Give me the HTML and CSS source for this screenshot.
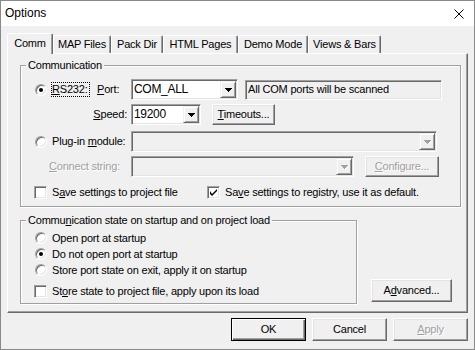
FILE: index.html
```html
<!doctype html>
<html lang="en">
  <head>
    <meta charset="UTF-8" />
    <title>Options</title>
    <link rel="stylesheet" href="styles.css">
  </head>
  <body>
    <div class="window">
      <div class="titlebar">
        <span class="title">Options</span>
        <svg class="close" width="10" height="10" viewBox="0 0 10 10">
          <path d="M0.5 0.5L9.5 9.5M9.5 0.5L0.5 9.5" stroke="#000" stroke-width="1" fill="none" />
        </svg>
      </div>

      <div class="client">
        <div class="tabs">
          <div class="tab active" style="width: 46px">Comm</div>
          <div class="tab" style="width: 58px">MAP Files</div>
          <div class="tab" style="width: 52px">Pack Dir</div>
          <div class="tab" style="width: 75px">HTML Pages</div>
          <div class="tab" style="width: 70px">Demo Mode</div>
          <div class="tab" style="width: 73px">Views &amp; Bars</div>
        </div>

        <div class="panel">
          <div class="group group-comm">
            <div class="group-title">Communication</div>

            <div class="row row-1 indent">
              <div class="choice" style="width: 62px">
                <span class="radio on"></span>
                <span class="opt-label focus"><u>R</u>S232:</span>
              </div>
              <span class="field-label" style="width: 34px"><u>P</u>ort:</span>
              <div class="combo" style="width: 107px">
                <span class="value">COM_ALL</span>
                <span class="drop"><svg width="7" height="4" viewBox="0 0 7 4"><path d="M0 0h7v1h-1v1h-1v1h-1v1h-1v-1h-1v-1h-1v-1h-1z" /></svg></span>
              </div>
              <div class="readonly">All COM ports will be scanned</div>
            </div>

            <div class="row row-2">
              <span class="field-label right"><u>S</u>peed:</span>
              <div class="combo" style="width: 70px">
                <span class="value">19200</span>
                <span class="drop"><svg width="7" height="4" viewBox="0 0 7 4"><path d="M0 0h7v1h-1v1h-1v1h-1v1h-1v-1h-1v-1h-1v-1h-1z" /></svg></span>
              </div>
              <button class="btn small" style="width: 63px"><u>T</u>imeouts...</button>
            </div>

            <div class="row row-3 indent">
              <div class="choice" style="width: 96px">
                <span class="radio"></span>
                <span class="opt-label">Plug-in <u>m</u>odule:</span>
              </div>
              <div class="combo disabled" style="width: 306px">
                <span class="value"></span>
                <span class="drop"><svg width="8" height="5" viewBox="0 0 8 5"><path class="hi" d="M1 1h7v1h-1v1h-1v1h-1v1h-1v-1h-1v-1h-1v-1h-1z" /><path d="M0 0h7v1h-1v1h-1v1h-1v1h-1v-1h-1v-1h-1v-1h-1z" /></svg></span>
              </div>
            </div>

            <div class="row row-4">
              <span class="field-label dim connect"><u>C</u>onnect string:</span>
              <div class="combo disabled" style="width: 223px">
                <span class="value"></span>
                <span class="drop"><svg width="8" height="5" viewBox="0 0 8 5"><path class="hi" d="M1 1h7v1h-1v1h-1v1h-1v1h-1v-1h-1v-1h-1v-1h-1z" /><path d="M0 0h7v1h-1v1h-1v1h-1v1h-1v-1h-1v-1h-1v-1h-1z" /></svg></span>
              </div>
              <button class="btn small dim" style="width: 74px"><u>C</u>onfigure...</button>
            </div>

            <div class="row row-5 check-row">
              <div class="check-opt" style="width: 173px">
                <span class="check"></span>
                <span class="opt-label">S<u>a</u>ve settings to project file</span>
              </div>
              <div class="check-opt">
                <span class="check on"><svg width="7" height="7" viewBox="0 0 7 7"><path d="M0 2v3l2 2 5-5V0L2 5z" /></svg></span>
                <span class="opt-label">Sa<u>v</u>e settings to registry, use it as default.</span>
              </div>
            </div>
          </div>

          <div class="lower">
            <div class="group group-state">
              <div class="group-title">Commu<u>n</u>ication state on startup and on project load</div>
              <div class="opt-row first">
                <span class="radio"></span>
                <span class="opt-label">Open port at startup</span>
              </div>
              <div class="opt-row">
                <span class="radio on"></span>
                <span class="opt-label">Do not open port at startup</span>
              </div>
              <div class="opt-row">
                <span class="radio"></span>
                <span class="opt-label">Store port state on exit, apply it on startup</span>
              </div>
              <div class="opt-row check-line">
                <span class="check"></span>
                <span class="opt-label">St<u>o</u>re state to project file, apply upon its load</span>
              </div>
            </div>
            <button class="btn advanced">A<u>d</u>vanced...</button>
          </div>
        </div>

        <div class="actions">
          <button class="btn default">OK</button>
          <button class="btn">Cancel</button>
          <button class="btn dim"><u>A</u>pply</button>
        </div>
      </div>
    </div>
  </body>
</html>
```

FILE: styles.css
```css
* {
  box-sizing: border-box;
}
body {
  margin: 0;
  font: 11px/13px "Liberation Sans", Arial, sans-serif;
  letter-spacing: -0.2px;
  color: #000;
  background: #fff;
}
u {
  text-underline-offset: 1px;
}

.window {
  width: 475px;
  height: 350px;
  border: 1px solid #8a8a8a;
  background: #f0f0f0;
  display: flex;
  flex-direction: column;
}
.titlebar {
  height: 25px;
  flex: none;
  background: #fff;
  display: flex;
  align-items: center;
  padding-left: 4px;
  font-size: 12px;
  letter-spacing: 0;
}
.title {
  flex: 1;
}
.close {
  margin-right: 10px;
}

.client {
  flex: 1;
  padding: 7px 0 0 6px;
}

/* tab strip */
.tabs {
  display: flex;
  align-items: flex-end;
  height: 20px;
}
.tab {
  height: 18px;
  padding-top: 2px;
  text-align: center;
  white-space: nowrap;
  border-top: 1px solid #fff;
  border-left: 1px solid #fff;
  border-right: 1px solid #696969;
  border-radius: 2px 2px 0 0;
  box-shadow: inset -1px 0 #a0a0a0;
}
.tab.active {
  height: 21px;
  margin-bottom: -1px;
  padding-top: 3px;
  position: relative;
  z-index: 1;
  background: #f0f0f0;
}

.panel {
  width: 461px;
  height: 260px;
  border: 1px solid;
  border-color: #fff #696969 #696969 #fff;
  box-shadow: inset -1px -1px #a0a0a0;
  padding: 11px 0 0 12px;
}

/* etched group boxes */
.group {
  border: 1px solid #a0a0a0;
  box-shadow: inset 1px 1px #fff, 1px 1px #fff;
}
.group-title {
  width: fit-content;
  margin: -7px 0 0 5px;
  padding: 0 2px;
  background: #f0f0f0;
  white-space: nowrap;
}
.group-comm {
  width: 441px;
  height: 142px;
}

.row {
  display: flex;
  align-items: center;
  height: 21px;
}
.indent {
  padding-left: 14px;
}
.row-1 { margin-top: 7px; }
.row-2 { margin-top: 4px; }
.row-3 { margin-top: 6px; }
.row-4 { margin-top: 4px; }
.row-5 {
  margin-top: 9px;
  height: 13px;
  padding-left: 13px;
}

.choice,
.check-opt {
  display: flex;
  align-items: center;
  flex: none;
}
.opt-label {
  margin-left: 5px;
  white-space: nowrap;
}
.radio + .opt-label {
  margin-left: 5px;
}
.opt-label.focus {
  margin-left: 4px;
  border: 1px dotted #000;
  padding-right: 1px;
}
.field-label {
  flex: none;
  white-space: nowrap;
}
.field-label.right {
  width: 110px;
  text-align: right;
  padding-right: 4px;
}
.field-label.connect {
  width: 110px;
  padding-left: 28px;
}
.dim {
  color: #a0a0a0;
  text-shadow: 1px 1px #fff;
}

/* radios and checkboxes */
.radio {
  flex: none;
  position: relative;
  width: 12px;
  height: 12px;
  border-radius: 50%;
  background: #fff;
  border: 1px solid;
  border-color: #a0a0a0 #fff #fff #a0a0a0;
  box-shadow: inset 1px 1px #696969, inset -1px -1px #e3e3e3;
}
.radio.on::after {
  content: "";
  position: absolute;
  left: 3px;
  top: 3px;
  width: 4px;
  height: 4px;
  border-radius: 50%;
  background: #000;
}
.check {
  flex: none;
  width: 13px;
  height: 13px;
  background: #fff;
  border: 1px solid;
  border-color: #a0a0a0 #fff #fff #a0a0a0;
  box-shadow: inset 1px 1px #696969, inset -1px -1px #e3e3e3;
  padding: 2px 0 0 2px;
}
.check svg {
  display: block;
}

/* combo boxes and edits */
.combo {
  flex: none;
  display: flex;
  height: 21px;
  padding: 1px;
  background: #fff;
  border: 1px solid;
  border-color: #a0a0a0 #fff #fff #a0a0a0;
  box-shadow: inset 1px 1px #696969, inset -1px -1px #e3e3e3;
}
.combo .value {
  flex: 1;
  padding-left: 1px;
  line-height: 17px;
  font-size: 12px;
  letter-spacing: -0.3px;
}
.combo .drop {
  width: 16px;
  height: 17px;
  display: flex;
  align-items: center;
  justify-content: center;
  background: #f0f0f0;
  border: 1px solid;
  border-color: #f0f0f0 #696969 #696969 #f0f0f0;
  box-shadow: inset 1px 1px #fff, inset -1px -1px #a0a0a0;
}
.combo.disabled {
  background: #f0f0f0;
}
.combo.disabled .drop path {
  fill: #a0a0a0;
}
.combo.disabled .drop path.hi {
  fill: #fff;
}
.combo.disabled .drop svg {
  margin: 1px 0 0 1px;
}
.readonly {
  flex: none;
  width: 197px;
  height: 20px;
  margin-left: 7px;
  padding-left: 2px;
  line-height: 16px;
  background: #f0f0f0;
  border: 1px solid;
  border-color: #a0a0a0 #fff #fff #a0a0a0;
  box-shadow: inset 1px 1px #696969, inset -1px -1px #e3e3e3;
  white-space: nowrap;
}

/* push buttons */
.btn {
  flex: none;
  width: 75px;
  height: 23px;
  padding: 0;
  font: inherit;
  letter-spacing: inherit;
  color: #000;
  background: #f0f0f0;
  border: 1px solid;
  border-color: #fff #696969 #696969 #fff;
  box-shadow: inset -1px -1px #a0a0a0, inset 1px 1px #e3e3e3;
  white-space: nowrap;
}
.btn.small {
  height: 21px;
  margin-left: 11px;
}
.btn.dim {
  color: #a0a0a0;
}
.btn.default {
  border-color: #000;
  box-shadow: inset 1px 1px #fff, inset -1px -1px #696969, inset -2px -2px #a0a0a0;
}

.lower {
  display: flex;
  align-items: flex-end;
  margin-top: 13px;
}
.group-state {
  width: 337px;
  height: 84px;
}
.opt-row {
  display: flex;
  align-items: center;
  height: 16px;
  padding-left: 14px;
}
.opt-row.first {
  margin-top: 3px;
}
.opt-row.check-line {
  margin-top: 6px;
  height: 14px;
  padding-left: 13px;
}
.btn.advanced {
  width: 81px;
  margin: 0 0 2px 14px;
}

.actions {
  display: flex;
  justify-content: flex-end;
  gap: 6px;
  padding-right: 6px;
  margin-top: 5px;
}
```
